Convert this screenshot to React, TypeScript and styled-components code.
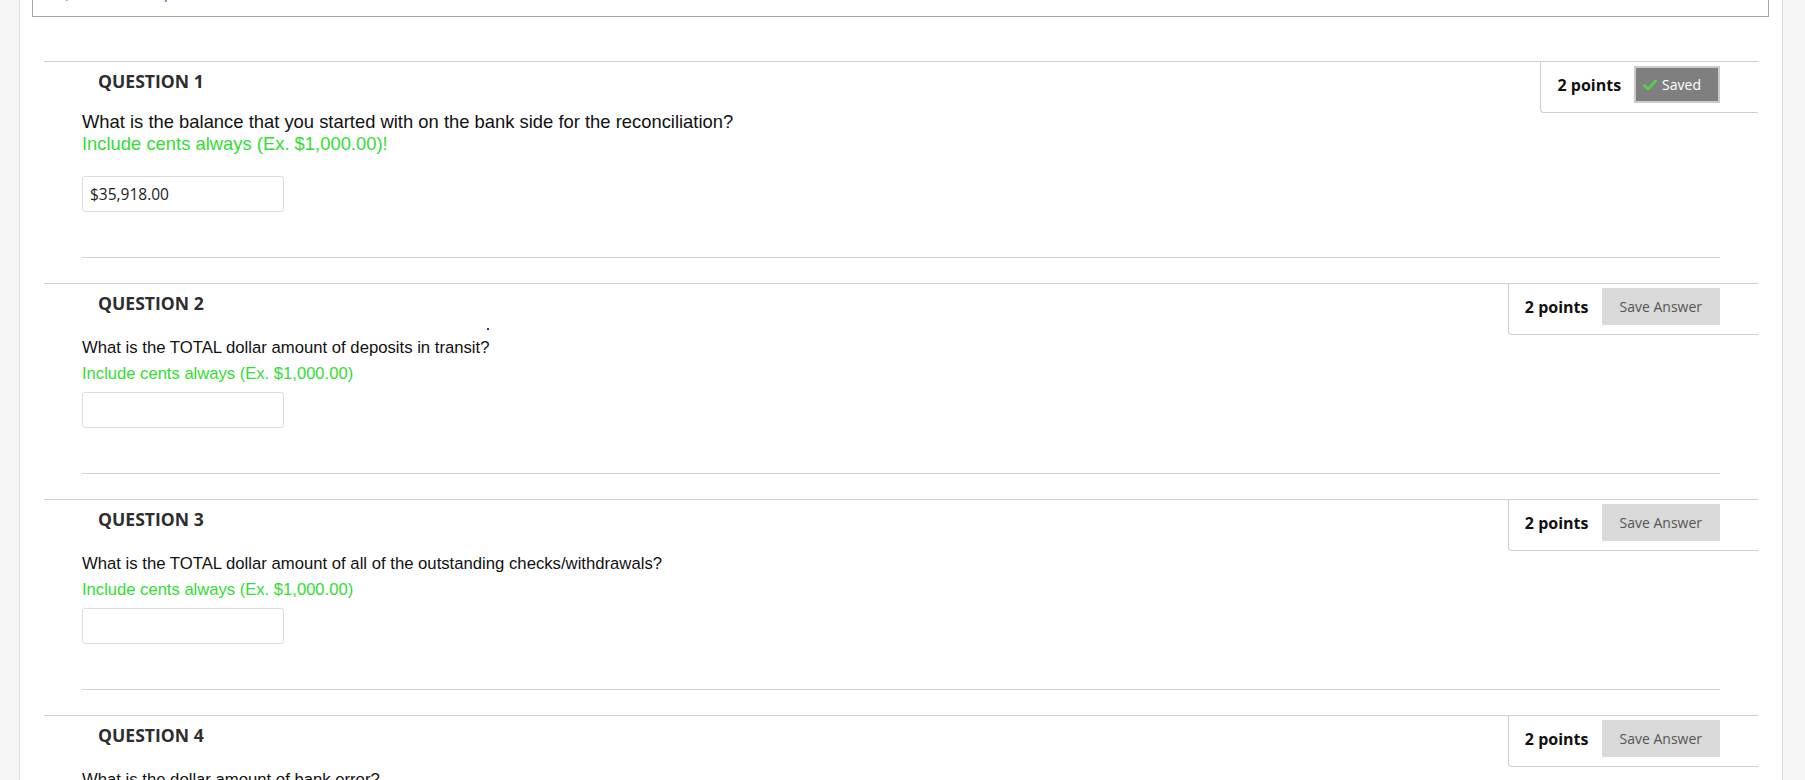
import styled, { createGlobalStyle } from "styled-components";

const GlobalStyle = createGlobalStyle`
  html, body {
    margin: 0;
    padding: 0;
    background: #f5f5f5;
  }
  body {
    font-family: "Open Sans", "Liberation Sans", Arial, sans-serif;
    overflow: hidden;
  }
  * {
    box-sizing: border-box;
  }
`;

const Page = styled.div`
  display: flex;
  min-height: 100vh;
`;

const Gutter = styled.div<{ $width: number }>`
  flex: 0 0 ${(p) => p.$width}px;
  background: #f5f5f5;
`;

const Main = styled.main`
  flex: 1;
  min-width: 0;
  background: #fff;
  border-left: 1px solid #dcdcdc;
  border-right: 1px solid #dcdcdc;
  padding-bottom: 60px;
`;

/* status box, scrolled mostly out of view */
const StatusBox = styled.div`
  margin: -22px 13px 0 12px;
  height: 39px;
  padding: 2px 0 0 24px;
  border: 1px solid #a6a6a6;
  overflow: hidden;
`;

const StatusLink = styled.a`
  font-size: 16px;
  line-height: 22px;
  color: #2a6ebb;
  text-decoration: none;
`;

const QuestionList = styled.div`
  margin: 44px 24px 0 24px;
`;

const Question = styled.section`
  position: relative;
  border-top: 1px solid #cfcfcf;
`;

const Title = styled.h3`
  margin: 7px 0 0;
  padding-left: 54px;
  font-size: 17.6px;
  line-height: 24px;
  font-weight: 700;
  color: #2e2e2e;
`;

const PointsBox = styled.div`
  position: absolute;
  top: 0;
  right: 0;
  display: flex;
  align-items: center;
  gap: 13px;
  padding: 4px 38px 9px 16px;
  border-left: 1px solid #cfcfcf;
  border-bottom: 1px solid #cfcfcf;
  border-bottom-left-radius: 4px;
  background: #fff;
`;

const Points = styled.span`
  font-size: 16px;
  font-weight: 700;
  color: #111;
`;

const SaveButton = styled.button<{ $saved?: boolean }>`
  display: flex;
  align-items: center;
  gap: 5px;
  height: 37px;
  padding: ${(p) => (p.$saved ? "0 17px 0 7px" : "0 18px")};
  font-family: "Open Sans", sans-serif;
  font-size: 14px;
  color: ${(p) => (p.$saved ? "#fff" : "#555")};
  background: ${(p) => (p.$saved ? "#7f7f7f" : "#dadada")};
  border: ${(p) => (p.$saved ? "2px solid #cbcbcb" : "none")};
  cursor: pointer;
`;

const Body = styled.div`
  padding: 0 38px 25px 38px;
`;

const Lead = styled.p`
  margin: 18px 0 0;
  font-family: "Liberation Sans", Arial, sans-serif;
  font-size: 18.4px;
  line-height: 22px;
  color: #111;
`;

const Prompt = styled.p`
  margin: 23px 0 0;
  font-family: "Liberation Sans", Arial, sans-serif;
  font-size: 16.7px;
  line-height: 19px;
  color: #111;
`;

const Hint = styled.span<{ $block?: boolean }>`
  display: ${(p) => (p.$block ? "block" : "inline")};
  margin-top: ${(p) => (p.$block ? "7px" : "0")};
  font-family: "Liberation Sans", Arial, sans-serif;
  font-size: 16.6px;
  line-height: 19px;
  color: #33dd33;
`;

const LeadHint = styled.span`
  color: #33dd33;
`;

const Answer = styled.input<{ $gap: number }>`
  display: block;
  width: 202px;
  height: 36px;
  margin: ${(p) => p.$gap}px 0 45px;
  padding: 0 7px;
  border: 1px solid #dcdcdc;
  border-radius: 3px;
  font-family: "Open Sans", sans-serif;
  font-size: 15.5px;
  color: #222;
  background: #fff;
  outline: none;
`;

const Divider = styled.hr`
  margin: 0;
  border: 0;
  border-top: 1px solid #d3d3d3;
`;

const Speck = styled.span`
  position: absolute;
  left: 443px;
  top: 44px;
  width: 2px;
  height: 2px;
  background: #2b2f9e;
`;

function Check() {
  return (
    <svg width="14" height="12" viewBox="0 0 14 12">
      <path
        d="M1.5 6.5 L5 10 L12.5 2"
        stroke="#56cf4a"
        strokeWidth="2.8"
        fill="none"
        strokeLinecap="round"
        strokeLinejoin="round"
      />
    </svg>
  );
}

type Item = {
  n: number;
  text: string;
  hint: string;
  value?: string;
  saved?: boolean;
  speck?: boolean;
};

const questions: Item[] = [
  {
    n: 1,
    text: "What is the balance that you started with on the bank side for the reconciliation?",
    hint: "Include cents always (Ex. $1,000.00)!",
    value: "$35,918.00",
    saved: true,
  },
  {
    n: 2,
    text: "What is the TOTAL dollar amount of deposits in transit?",
    hint: "Include cents always (Ex. $1,000.00)",
    speck: true,
  },
  {
    n: 3,
    text: "What is the TOTAL dollar amount of all of the outstanding checks/withdrawals?",
    hint: "Include cents always (Ex. $1,000.00)",
  },
  {
    n: 4,
    text: "What is the dollar amount of bank error?",
    hint: "Include cents always (Ex. $1,000.00)",
  },
];

export default function App() {
  return (
    <>
      <GlobalStyle />
      <Page>
        <Gutter $width={19} />
        <Main>
          <StatusBox>
            <StatusLink href="#">Question Completion Status:</StatusLink>
          </StatusBox>
          <QuestionList>
            {questions.map((q) => (
              <Question key={q.n}>
                <Title>QUESTION {q.n}</Title>
                <PointsBox>
                  <Points>2 points</Points>
                  {q.saved ? (
                    <SaveButton $saved>
                      <Check />
                      Saved
                    </SaveButton>
                  ) : (
                    <SaveButton>Save Answer</SaveButton>
                  )}
                </PointsBox>
                {q.speck && <Speck />}
                <Body>
                  {q.n === 1 ? (
                    <>
                      <Lead>
                        {q.text}
                        <br />
                        <LeadHint>{q.hint}</LeadHint>
                      </Lead>
                      <Answer $gap={21} defaultValue={q.value} />
                    </>
                  ) : (
                    <>
                      <Prompt>{q.text}</Prompt>
                      <Hint $block>{q.hint}</Hint>
                      <Answer $gap={9} defaultValue={q.value} />
                    </>
                  )}
                  <Divider />
                </Body>
              </Question>
            ))}
          </QuestionList>
        </Main>
        <Gutter $width={22} />
      </Page>
    </>
  );
}
